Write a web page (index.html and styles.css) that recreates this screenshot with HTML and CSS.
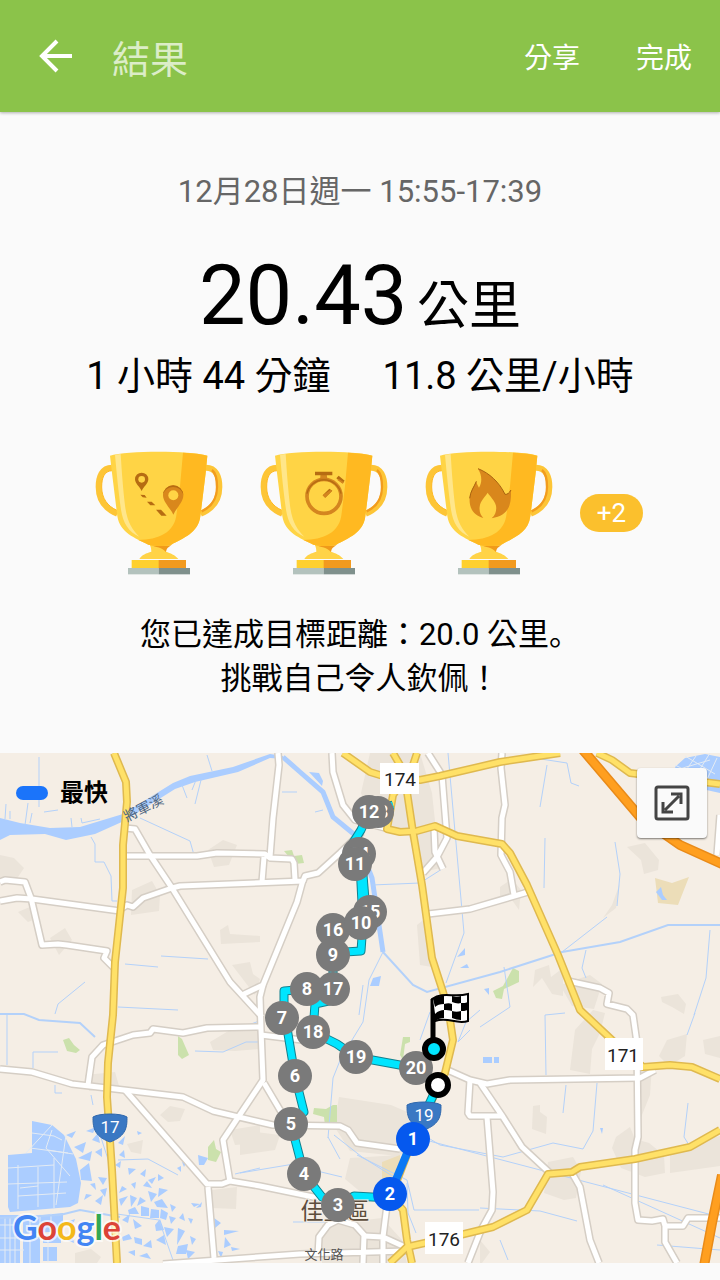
FILE: index.html
```html
<!DOCTYPE html>
<html lang="zh-Hant">
<head>
    <meta charset="UTF-8">
    <meta name="viewport" content="width=device-width, initial-scale=1.0">
    <title>結果</title>
    <link rel="stylesheet" href="styles.css">
</head>
<body>
    <header class="app-bar">
        <button class="back-button" type="button" aria-label="返回">
            <svg width="34" height="34" viewBox="0 0 34 34" fill="none" stroke="currentColor" stroke-width="4">
                <path d="M33 17H4M18 2L3 17l15 15"></path>
            </svg>
        </button>
        <h1 class="app-title">結果</h1>
        <button class="bar-action" type="button">分享</button>
        <button class="bar-action" type="button">完成</button>
    </header>

    <main>
        <section class="summary">
            <p class="date">12月28日週一 15:55-17:39</p>
            <p class="distance">20.43 <span class="unit">公里</span></p>
            <div class="stats">
                <span>1 小時 44 分鐘</span>
                <span>11.8 公里/小時</span>
            </div>

            <!-- Shared trophy shape -->
            <svg class="sprite" width="0" height="0" aria-hidden="true">
                <symbol id="cup" viewBox="45 64 384 372">
                    <path d="M96 114C66 114 56 142 56 172c0 40 22 66 56 80" fill="none" stroke="#fdc536" stroke-width="18"></path>
                    <path d="M96 123C72 124 65 146 65 172c0 34 18 58 46 70" fill="none" stroke="#ffb921" stroke-width="3"></path>
                    <path d="M378 114c30 0 40 28 40 58 0 40-22 66-56 80" fill="none" stroke="#fdc536" stroke-width="18"></path>
                    <path d="M396 121c10 8 15 28 15 51 0 34-18 60-46 73" fill="none" stroke="#f29c1e" stroke-width="7"></path>
                    <path d="M205 335L274 335C266 348 258 352 258 366C270 370 286 376 295 388H178C184 376 200 370 214 366C214 352 210 348 205 335Z" fill="#ffd347"></path>
                    <path d="M212 347H274C264 353 259 357 258 367C246 354 228 352 212 347Z" fill="#f09a1a"></path>
                    <path d="M90 78C140 62 330 62 382 78L377 130L361 260C355 310 310 325 274 345C260 350 220 350 205 345C165 325 120 310 112 260L96 130Z" fill="#ffd445"></path>
                    <path d="M309 69C340 70 368 73 382 78L377 130L361 260C355 310 310 325 274 345C260 350 220 350 205 345C195 340 185 336 175 331C235 330 285 310 290 250L300 170Z" fill="#ffb921"></path>
                    <path d="M105 75L122 73C125 120 129 180 136 235C143 280 158 302 178 321C146 307 129 280 123 240C116 190 110 130 105 75Z" fill="#ffe68a"></path>
                    <path d="M155 391H318V415H155Z" fill="#ffd02f"></path>
                    <path d="M236 391H318V415H236Z" fill="#f29a1f"></path>
                    <path d="M144 415H236V434H144Z" fill="#b3c2bd"></path>
                    <path d="M236 415H330V434H236Z" fill="#7f908c"></path>
                </symbol>
            </svg>

            <div class="trophies">
                <svg class="trophy" viewBox="45 64 384 372" role="img" aria-label="距離">
                    <use href="#cup" x="45" y="64" width="384" height="372"></use>
                    <g fill="#b66c12">
                        <path d="M185 184C180 172 165 162 165 149a20 20 0 0 1 40 0C205 162 190 172 185 184Z"></path>
                        <path d="M280 255C272 236 249 218 249 197a30 30 0 0 1 61 0C310 218 288 236 280 255Z" fill="#d9871c"></path>
                        <path d="M249 197a30 30 0 0 1 61 0c-6-32-54-34-61 0Z"></path>
                        <path d="M181 195l13 1 6 8-12-1zM201 216l14 0 11 11-15 0zM228 240l15 0 17 18-16 0z"></path>
                    </g>
                    <circle cx="185" cy="149" r="10" fill="#ffd445"></circle>
                    <circle cx="280" cy="197" r="15" fill="#ffd445"></circle>
                </svg>
                <svg class="trophy" viewBox="45 64 384 372" role="img" aria-label="時間">
                    <use href="#cup" x="45" y="64" width="384" height="372"></use>
                    <circle cx="237" cy="200" r="51" fill="none" stroke="#d4851f" stroke-width="11"></circle>
                    <path d="M186 192a52 52 0 0 1 102 0" fill="none" stroke="#b66c12" stroke-width="4"></path>
                    <path d="M210 126h52v11h-17v10h-18v-10h-17zM274 146l7-8 18 15-7 8zM233 197l20-20 9 6-21 21z" fill="#b66c12"></path>
                    <path d="M227 137h18v10h-18zM277 151l3-4 17 11-4 4zM233 197l7 7 21-20-4-4z" fill="#d4851f"></path>
                </svg>
                <svg class="trophy" viewBox="45 64 384 372" role="img" aria-label="熱量">
                    <use href="#cup" x="45" y="64" width="384" height="372"></use>
                    <path d="M204 117C238 130 268 158 285 194C292 195 298 190 303 181C304 226 298 256 245 266C258 255 260 240 258 228C254 212 240 200 233 189C226 200 211 213 209 231C207 246 212 257 220 265C188 256 177 232 179 206C181 184 193 171 199 155C200 162 203 168 207 174C217 158 216 136 204 117Z" fill="#d9871c"></path>
                    <path d="M204 117C238 130 268 158 285 194C292 195 298 190 303 181M179 206C181 184 193 171 199 155" fill="none" stroke="#a8620f" stroke-width="3"></path>
                </svg>
                <span class="more">+2</span>
            </div>

            <p class="message">您已達成目標距離：20.0 公里<span class="stop" lang="ja">。</span><br>挑戰自己令人欽佩！</p>
        </section>

        <section class="map">
            <svg class="map-canvas" viewBox="0 753 720 510" role="img" aria-label="路線地圖">
                <defs>
                    <g id="roads">
                        <path d="M0 882L5 880 25 882 31 898 42 945 58 944 67 945 107 951 104 958 115 969"></path>
                        <path d="M0 901L17 898 32 899 120 911"></path>
                        <path d="M125 828L135 829 150 855 172 888 230 982 262 1017"></path>
                        <path d="M124 856H197L217 853 265 854 270 858 292 859 294 863 295 880M264 857L262 882"></path>
                        <path d="M122 908L127 905 133 907 143 898 172 888 180 886 303 881 305 876 318 873 340 853 362 832"></path>
                        <path d="M278 753L279 765 273 818 270 857"></path>
                        <path d="M303 880L297 902 263 985 242 995"></path>
                        <path d="M263 985L260 997 261 1030 263 1080 223 1140 230 1182"></path>
                        <path d="M264 1083L280 1110 290 1125M88 1085L92 1057 103 1045 133 1035 150 1033 153 1029 183 1033 207 1028 260 1027M261 1035L310 1041"></path>
                        <path d="M0 1069L32 1072 72 1084 107 1088 183 1097 213 1111 273 1125 340 1126 348 1130 357 1143 400 1149"></path>
                        <path d="M125 1090L207 1184 222 1184 230 1181 260 1186 323 1199M208 1187L214 1258"></path>
                        <path d="M163 1264L300 1254 407 1251M318 1255L319 1237 328 1225 338 1220 355 1225 364 1235 363 1263"></path>
                        <path d="M364 1236L383 1237 405 1247M387 1205L383 1237V1263"></path>
                        <path d="M332 753L333 772 343 805 355 820 385 828"></path>
                        <path d="M428 753L442 775 447 838 437 857 423 873M434 828L435 852 443 869"></path>
                        <path d="M428 914L470 909 528 892M502 753L501 768 505 805 502 818 501 855 510 872 514 895"></path>
                        <path d="M568 981L600 988 609 993 607 1004 627 1009 633 1015 637 1043 638 1137 635 1150V1203L638 1220 652 1221 663 1219 665 1226V1242L677 1263"></path>
                        <path d="M665 1226H683L688 1218H720M720 815L717 855"></path>
                        <path d="M443 1068L470 1080 487 1084 510 1080 640 1078 655 1070"></path>
                        <path d="M470 1080L468 1113 470 1116H503M480 1083L503 1117 522 1147 550 1173"></path>
                        <path d="M487 1117L493 1192 492 1210 481 1230 468 1263M572 1173L580 1187 590 1240 599 1263"></path>
                    </g>
                    <g id="highways">
                        <path d="M114 753L126 782 127 802 123 845 123 888 115 962 113 1015 108 1063 107 1097 112 1170 117 1263"></path>
                        <path d="M343 753L370 772 383 776 420 780 440 776 500 762 560 753"></path>
                        <path d="M393 753L400 765 407 792 413 832 422 885 432 958 443 992 449 1013 453 1040 445 1073 413 1139 391 1196 403 1210 407 1240 412 1263"></path>
                        <path d="M417 753L413 765 393 795 387 829 400 832 417 831 435 826 457 836 502 844 510 853 527 885 558 955 580 1010 612 1040 643 1067 670 1065 692 1067 720 1079"></path>
                        <path d="M720 1130L690 1147 635 1159 580 1167 572 1172 548 1174 527 1210 493 1227 460 1235 407 1247 390 1263"></path>
                        <path d="M597 753L612 760 630 773 720 784"></path>
                    </g>
                    <g id="freeways">
                        <path d="M583 750L640 817 680 845 722 864M722 1175L712 1223 704 1266"></path>
                    </g>
                    <g id="track">
                        <path d="M393 805L369 812 361 830 351 846 360 864 363 923 361 951 345 952 333 955V1000L315 1004 313 1032 337 1044 356 1057 416 1068 434 1049"></path>
                        <path d="M307 989L284 991 284 1010 295 1076 304 1112 291 1124 304 1174 322 1197 338 1205 354 1196 390 1198M413 1139L438 1085"></path>
                        <path d="M363 875L366 912"></path>
                    </g>
                </defs>

                <rect class="land" x="0" y="753" width="720" height="510"></rect>

                <!-- Built-up areas -->
                <g class="town">
                    <path d="M370 753h50l12 40 8 75-20 5-12-40-35-5-12-35zM132 890l20-9 8 14-1 16-28 4zM208 850l15-10 14 5-8 20-15 2zM0 855l14 3 10 10-8 12-16 2zM18 912l14-6 6 12-10 4zM50 938l15-10 7 12-13 15zM220 930l8-5 2 9 30 2v6l-39 2zM232 965l18-3 3 12 7 5-5 16z"></path>
                    <path d="M210 1042l20-12 30 1v18l-25 2-22-1zM85 1075l30-3 4 14-30 5zM160 1115l10-9 15 3-5 12-12 1zM230 1130l30-5v18l-25 2zM212 1190l25-3-1 22-24-1zM127 1144l16-4-2 14-10-2z"></path>
                    <path d="M339 1097l52 8 35 15-8 28-20 8-48-5-16-25zM350 1158l50-3-7 34-12 14-18-9-18-15zM322 1225l60-7 20 22 5 23h-85zM240 1130l40 5-5 15-35 5zM417 925l10-8 7 35-2 15-12-2z"></path>
                    <path d="M627 847l18-4 14 17-1 10-14 4-3-14zM500 887l12-8 9 11-2 20-7-10-12-2zM612 905l8-22-4 25-13 10zM535 970l14-5 2 12 12-9v28l-11-2-10-16-9 9zM560 985l30-10 12 9-8 25-22-3zM661 997l17-3 8 10-2 10-12-7-10-5z"></path>
                    <path d="M575 1030l18-20 12 3-5 20-8 16-2 25-20-4zM667 1040l20-6-2 22-16 10-10-10zM703 1040l17-4v22l-15-4zM533 1106l7-1v7l7 5-1 17-14-5zM616 1137l14-10 5 12 14 4 15 12 1 18-20 4-24-9-9-20zM670 1148l50-12v30l-50 7zM548 1162l25-5 8 14-5 27-12 2-20-7z"></path>
                    <path d="M638 1070l14-5-2 30-10 25zM480 1240l10 12-8 11h-2zM75 1253l16-4 10 8-4 6H75z"></path>
                </g>
                <g class="park">
                    <path d="M63 1040l6-2 5 7 6 5-4 3-9-2zM178 1036l4 3 7 16-7 4-4-4zM208 1147l6-7 2 9 5 3-5 10-8-2zM314 1108l12 1 7-4h4v22l-12-1-1-9-11-3zM403 1037h7v5l-5 2-2 16-3-5zM513 968l6 3v11l-15 7-2 10-6-1-3-7 10-5zM284 851l8-1 2 6 8-1 2 8-9 1z"></path>
                    <path class="sand" d="M655 878l17 5 17-6-11 28-20-2zM382 1162l18-7 2 16-12 14-8-2z"></path>
                </g>

                <!-- Rivers and canals -->
                <g class="water">
                    <path d="M0 818L20 823 50 828 80 827 123 814 173 783 190 776 233 767 270 754 283 756 283 759 270 758 238 772 195 782 175 789 124 821 95 834 66 840 45 834 10 835 0 840Z"></path>
                    <path d="M8 1155l24-2v-32l20 4 12 10 12 24 5 24-3 20-8 4-60 5-2-5V1160z"></path>
                    <path d="M309 772l10 1 4 8-1 5zM373 978l8-2-2 10h-9zM457 957l8-9v7zM460 968l7-4 2 4zM484 989l5-1v7zM483 1057h9v6h-9zM494 1057h5v6h-5zM656 892l5-5 2 8 4 5h-5zM600 1128h3l-1 6zM198 1155l10 3-4 7h-5z"></path>
                    <path d="M675 767l10-9 20-4 15 3v36l-18-4-10-14-14-2z"></path>
                    <path d="M0 1215h20v48H0zM23 1217l40-4v18l-40 3zM23 1237h17v26H23zM43 1236l18-3v10H43zM43 1247h14v14H43z"></path>
                    <!-- Fish ponds along road 17 -->
                    <path d="M66 1135l10-4-4 7zM74 1147l12-5-3 11zM78 1158l14-7-2 10zM80 1170l9-7 3 18-11-1zM92 1140l6-7 2 10zM95 1152l7-4v9zM86 1131l10-4-3 6zM118 1143l7-7-2 9zM119 1155l5-5 1 8zM137 1131l5 2-4 2zM115 1165l6-4-1 7zM128 1168l8 1-7 6zM140 1174l6-5-1 8zM148 1180l8-3-4 7zM158 1174l6 4-6 3zM143 1186l4-5 5 7zM131 1184l5-2-1 7zM122 1186l5 3-8 4zM90 1184l5-1 1 7zM98 1177l9 1-4 7zM100 1190l7-2-2 9zM86 1194l6 1-8 5zM95 1201l8-6-2 10zM119 1199l9-3-7 10zM130 1195l7 3-6 9zM140 1197l6 4-9 5zM148 1191l9 3-6 8zM159 1188l9 2-10 7zM154 1202l8-3 6 9-11-1zM128 1210l7-3 4 7h-10zM141 1206l8 2v8h-8zM151 1209l8 1v8h-9zM161 1209l7 4-2 7-6-2zM170 1204l6 3-4 5zM177 1168l4-2v6zM182 1162l4 1-2 4zM122 1220l8-6-2 9zM133 1219l9 7-7 3zM155 1225l5-6 4 11-8 1zM169 1216l7 2-5 6zM179 1218l4-5 2 8zM164 1227l10 2-7 8zM178 1228l7 3-8 14zM188 1218l5 1-2 5zM122 1237l7-3 3 5-9 2zM134 1237l8 2v6l-7-2zM143 1246l8-6 1 8zM156 1240l8-5 2 10zM178 1246l10-2-2 10h-10zM190 1236l6 3-4 6zM186 1250l9 2-7 7zM214 1218l7 5-6 5zM224 1230l15 1-15 4zM225 1237l6 8-7 3zM231 1247l9 2-8 2zM218 1251l5 1-2 6zM191 1203l9 1-6 3zM202 1202l-6 6 5-1zM67 1240l6-3 1 6zM67 1222l8-3-3 8zM128 1252l7-2v6zM139 1256l8-3 4 6z"></path>
                </g>
                <g class="pond-lines">
                    <path d="M8 1168l46-3M18 1165v44M38 1167v40M54 1158v50M8 1184l59-2M18 1196l48-3M26 1153l26-28M32 1133l22 3 8 4M30 1148l38 5M48 1150l25 4M52 1130l-6 18 24 28M66 1135l-10 70"></path>
                    <path d="M5 1217v46M10 1217v46M15 1217v46M0 1225h22M0 1238h24M0 1250h24M30 1216v18M40 1214v18M51 1213v20M30 1237v26M48 1234v28M20 1188l18-2"></path>
                    <path d="M675 765l40 20M685 756l30 18M690 785l20-32M702 790l15-32M682 776l14-20M676 770l34-10"></path>
                </g>
                <g class="canal">
                    <path class="wide" d="M283 757l17 15 23 20 10 25 22 18 17 43 11 74"></path>
                    <path class="mid" d="M383 952l30 33 14 7 73-20 62-20 58-10 48-17h52M0 1014h24l15 6 41 3 15 14M0 1218l60-3 20-5 40 7"></path>
                    <path d="M39 757v50M25 825l3-22M5 819l1-15M10 819v-8M30 823l2-10M71 818l1 9M81 818l1 5 18-4M44 812l14-2M91 837l4 7v18h9l7 14 1 25h5M140 818l50 23 4 14M182 785l5 13M196 780l-4 10M201 780l-6 24M207 755l5 16M85 982l-27 22-3 10M125 964l33 3M161 956l47 3M118 1007l60 3M33 1068v-16h25M7 1015v50M55 1085v8h7M91 1095l2 10M97 1125l16 50M118 1160l30-1 30 16M195 1051l28 1 23-10h14M235 1174l25-6M117 1214l42 6 15 43M282 792h15M323 810l-8 2"></path>
                    <path d="M448 753l16 180-18 50M372 885l48-2 22-14M383 952l-14 28-6 42-22 36-8 20-5 60M363 985l-4 30M541 759l26 4 4 20 8 3M547 765l-7 42M545 838l-1 50M615 842l5 32-3 32M562 952l45-35M586 950l-4 18 4 10M710 930l-4 48-12 37M695 1013l-8 22M480 1027l30-20-6-40M565 1013l-20 2 1 60M566 1085l-3 28M597 1083l-4 48-10 18-30-6-50 14-63-12-20-12M423 1139l10 3 287 75M688 1103l-4 34 5 8M603 1185l117 53M480 1208l60 3 37 10M657 1245l63 5M240 1173l60-10M328 1137l12 22M357 1155l50 25 7 30 65 0M407 1183l1 30 8 20M262 1020l-22 8M292 1165l50 12M334 1135l28 22 40 25M293 1222h50M420 1040l10-28M500 1240l8 20M470 1030l-12 12 8-20 14-12"></path>
                </g>

                <use class="road-casing" href="#roads"></use>
                <use class="road" href="#roads"></use>
                <use class="highway-casing" href="#highways"></use>
                <use class="highway" href="#highways"></use>
                <use class="freeway-casing" href="#freeways"></use>
                <use class="freeway" href="#freeways"></use>

                <text class="river-name" transform="translate(127 822) rotate(-27)">將軍溪</text>
                <text class="street-name" x="324" y="1259">文化路</text>

                <use class="track-casing" href="#track"></use>
                <use class="track" href="#track"></use>
                <path class="track-fast" d="M390 1194L413 1139"></path>
                <text class="town-name" x="335" y="1219">佳里區</text>

                <!-- Road signs -->
                <g class="sign">
                    <rect x="380" y="763" width="39" height="31"></rect>
                    <rect x="605" y="1038" width="38" height="32"></rect>
                    <rect x="425" y="1222" width="38" height="32"></rect>
                    <text x="400" y="786">174</text>
                    <text x="623" y="1062">171</text>
                    <text x="444" y="1246">176</text>
                </g>
                <g class="shield">
                    <path d="M93 1117c6-4 28-4 34 0 0 9 0 19-17 25-17-6-17-16-17-25z"></path>
                    <path d="M407 1105c6-4 28-4 34 0 0 9 0 19-17 25-17-6-17-16-17-25z"></path>
                    <text x="110" y="1133">17</text>
                    <text x="424" y="1121">19</text>
                </g>

                <!-- Kilometre markers -->
                <g class="marker">
                    <circle cx="378" cy="812" r="16"></circle><text x="378" y="818">13</text>
                    <circle cx="416" cy="1068" r="17"></circle><text x="416" y="1074">20</text>
                    <circle cx="356" cy="1057" r="17"></circle><text x="356" y="1063">19</text>
                    <circle cx="313" cy="1032" r="17"></circle><text x="313" y="1038">18</text>
                    <circle cx="333" cy="989" r="17"></circle><text x="333" y="995">17</text>
                    <circle cx="333" cy="930" r="17"></circle><text x="333" y="936">16</text>
                    <circle cx="370" cy="912" r="17"></circle><text x="370" y="918">15</text>
                    <circle cx="359" cy="854" r="17"></circle><text x="359" y="860">14</text>
                    <circle cx="369" cy="812" r="17"></circle><text x="369" y="818">12</text>
                    <circle cx="355" cy="864" r="17"></circle><text x="355" y="870">11</text>
                    <circle cx="361" cy="923" r="17"></circle><text x="361" y="929">10</text>
                    <circle cx="333" cy="955" r="17"></circle><text x="333" y="961">9</text>
                    <circle cx="307" cy="989" r="17"></circle><text x="307" y="995">8</text>
                    <circle cx="282" cy="1018" r="17"></circle><text x="282" y="1024">7</text>
                    <circle cx="295" cy="1076" r="17"></circle><text x="295" y="1082">6</text>
                    <circle cx="291" cy="1124" r="17"></circle><text x="291" y="1130">5</text>
                    <circle cx="304" cy="1174" r="17"></circle><text x="304" y="1180">4</text>
                    <circle cx="338" cy="1205" r="17"></circle><text x="338" y="1211">3</text>
                    <circle class="fast" cx="390" cy="1194" r="17"></circle><text x="390" y="1200">2</text>
                    <circle class="fast" cx="413" cy="1139" r="17"></circle><text x="413" y="1145">1</text>
                </g>

                <!-- Start and finish -->
                <circle cx="438" cy="1085" r="10" fill="#fff" stroke="#000" stroke-width="6"></circle>
                <circle cx="434" cy="1049" r="9" fill="#00e5ff" stroke="#000" stroke-width="6"></circle>
                <path d="M433 1040V999" stroke="#000" stroke-width="5"></path>
                <path d="M432 999C444 991 453 998 468 994V1021C456 1025 448 1016 435 1021Z" fill="#fff" stroke="#000" stroke-width="2"></path>
                <path d="M433 999c4-3 7-3 11-3v8c-4 0-7 1-9 3zM452 996c4 1 6 1 9 0v7c-3 1-6 0-9-1zM444 1004c3-1 6-1 8 0v7c-3-1-5-1-8-1zM461 1003c3 0 5 0 7-1v8c-3 1-5 1-7 1zM435 1014c3-3 6-4 9-4v8c-3 0-6 1-9 3zM452 1011c3 1 6 1 9 0v9c-3 0-6-1-9-2z" fill="#000"></path>

                <text class="google" x="13" y="1240"><tspan fill="#4285f4">G</tspan><tspan fill="#dc4437">o</tspan><tspan fill="#f4b81a">o</tspan><tspan fill="#4285f4">g</tspan><tspan fill="#34a853">l</tspan><tspan fill="#dc4437">e</tspan></text>
            </svg>

            <div class="legend"><span class="swatch"></span>最快</div>
            <button class="expand" type="button" aria-label="展開地圖">
                <svg width="36" height="36" viewBox="0 0 36 36" fill="none" stroke="currentColor" stroke-width="3">
                    <rect x="2" y="2" width="32" height="32" rx="2"></rect>
                    <path d="M11 25L25 11M17 9h10v10M9 17v10h10"></path>
                </svg>
            </button>
        </section>
    </main>
</body>
</html>
```
FILE: styles.css
```css
* {
    box-sizing: border-box;
}

body {
    margin: 0;
    background-color: #fafafa;
    color: #000;
    font-family: Roboto, "Noto Sans CJK TC", sans-serif;
}

h1, p {
    margin: 0;
    font-weight: normal;
}

button {
    border: none;
    padding: 0;
    background: none;
    color: inherit;
    font-family: inherit;
}

/* Top bar */
.app-bar {
    display: flex;
    align-items: center;
    gap: 56px;
    height: 112px;
    padding: 0 28px 0 39px;
    background-color: #8bc34a;
    box-shadow: 0 1px 3px rgba(0, 0, 0, 0.3);
    color: #fff;
}

.back-button svg {
    display: block;
}

.app-title {
    flex: 1;
    margin-left: -17px;
    font-size: 38px;
    color: #dcedc8;
}

.bar-action {
    font-size: 28px;
}

/* Workout summary */
.summary {
    padding: 60px 16px 52px;
    text-align: center;
}

.date {
    font-size: 31px;
    line-height: 40px;
    color: #666;
}

.distance {
    margin-top: 28px;
    font-size: 83px;
    line-height: 112px;
}

.unit {
    margin-left: -11px;
    font-size: 52px;
}

.stats {
    display: flex;
    justify-content: center;
    gap: 52px;
    margin-top: -11px;
    font-size: 38px;
    line-height: 48px;
}

.sprite {
    position: absolute;
}

.trophies {
    display: flex;
    justify-content: center;
    align-items: center;
    gap: 37px;
    margin-top: 51px;
    padding-left: 18px;
}

.trophy {
    width: 128px;
    height: 124px;
}

.more {
    margin-left: -10px;
    width: 63px;
    border-radius: 19px;
    background-color: #fbc02d;
    color: #fff;
    font-size: 26px;
    line-height: 38px;
}

.message {
    margin-top: 35px;
    font-size: 31px;
    line-height: 44px;
}

/* Full stop sits in the lower left of its box */
.stop {
    font-family: "Noto Sans CJK JP", sans-serif;
}

/* Map */
.map {
    position: relative;
    margin-bottom: 17px;
}

.map-canvas {
    display: block;
    width: 100%;
    height: auto;
}

.land {
    fill: #f5eee5;
}

.town {
    fill: #ebe4da;
}

.park {
    fill: #cbe1ac;
}

.park .sand {
    fill: #ecddb8;
}

.water {
    fill: #abcdff;
}

.pond-lines {
    fill: none;
    stroke: #e4ebf3;
    stroke-width: 1;
}

.canal {
    fill: none;
    stroke: #b3d1fa;
    stroke-width: 1;
}

.canal .mid {
    stroke-width: 2;
}

.canal .wide {
    stroke: #abcdff;
    stroke-width: 5;
}

.road-casing,
.road,
.highway-casing,
.highway,
.freeway-casing,
.freeway,
.track-casing,
.track,
.track-fast {
    fill: none;
    stroke-linejoin: round;
}

.road-casing {
    stroke: #d5cec5;
    stroke-width: 8;
}

.road {
    stroke: #fff;
    stroke-width: 5;
}

.highway-casing {
    stroke: #dfb94f;
    stroke-width: 8;
}

.highway {
    stroke: #ffe168;
    stroke-width: 5;
}

.freeway-casing {
    stroke: #e98b19;
    stroke-width: 10;
}

.freeway {
    stroke: #ff9f1f;
    stroke-width: 7;
}

.track-casing {
    stroke: #12808e;
    stroke-width: 9;
}

.track {
    stroke: #00e5ff;
    stroke-width: 7;
}

.track-fast {
    stroke: #0a78f5;
    stroke-width: 8;
}

.map text {
    text-anchor: middle;
}

.map .river-name {
    font-size: 14px;
    fill: #4d6580;
    text-anchor: start;
}

.street-name {
    font-size: 13px;
    fill: #555;
}

.town-name {
    font-size: 23px;
    fill: #5d4d3c;
    stroke: #f5eee5;
    stroke-width: 2;
    paint-order: stroke;
}

.sign rect {
    fill: #fff;
}

.sign text {
    font-size: 19px;
    fill: #222;
}

.shield path {
    fill: #3a78c3;
    stroke: #2f68ad;
}

.shield text {
    font-size: 17px;
    fill: #fff;
}

.marker circle {
    fill: #7a7a7a;
}

.marker .fast {
    fill: #0558ee;
}

.marker text {
    font-size: 18px;
    font-weight: bold;
    fill: #fff;
}

.map .google {
    font-family: Lato, sans-serif;
    font-size: 34px;
    font-weight: bold;
    text-anchor: start;
    stroke: #fff;
    stroke-width: 4;
    stroke-opacity: 0.7;
    paint-order: stroke;
}

.legend {
    position: absolute;
    top: 24px;
    left: 16px;
    display: flex;
    align-items: center;
    gap: 12px;
    font-size: 24px;
    font-weight: bold;
    line-height: 32px;
}

.swatch {
    width: 32px;
    height: 14px;
    border-radius: 7px;
    background-color: #1b74fa;
}

.expand {
    position: absolute;
    top: 15px;
    right: 13px;
    display: flex;
    align-items: center;
    justify-content: center;
    width: 70px;
    height: 70px;
    border-radius: 4px;
    background-color: #fafafa;
    box-shadow: 0 1px 2px rgba(0, 0, 0, 0.5);
    color: #444;
}
```
